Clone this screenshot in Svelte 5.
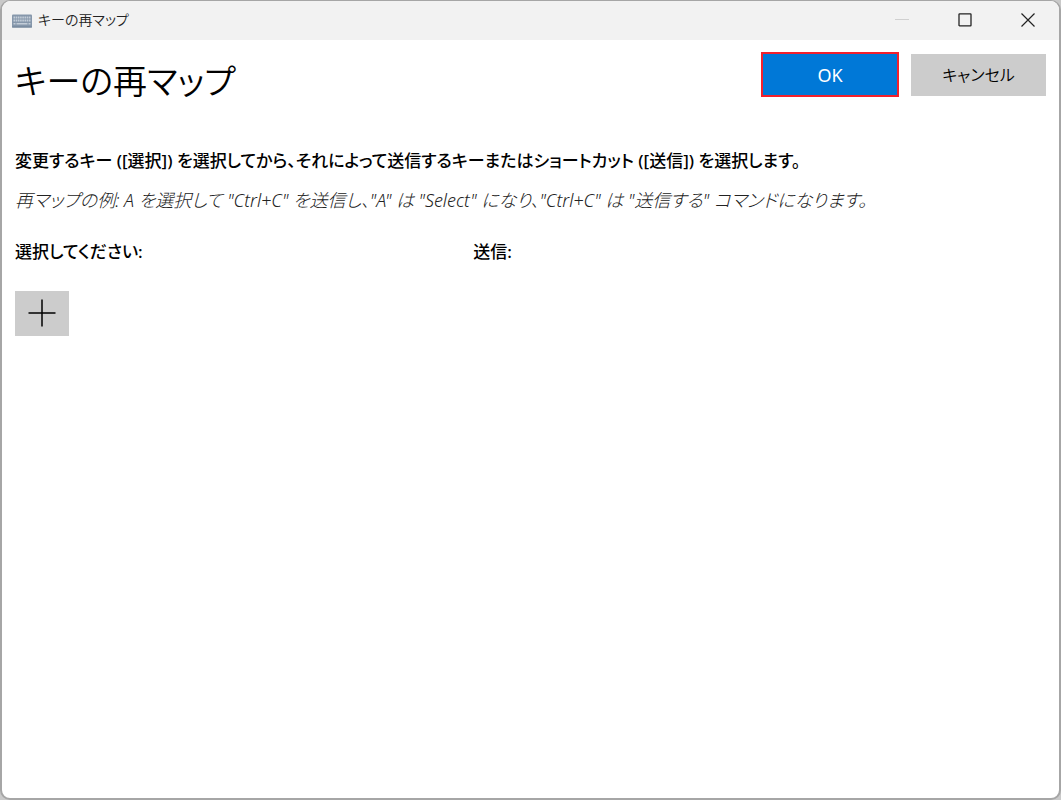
<script lang="ts">
  const title = 'キーの再マップ';
</script>

<main class="window">
  <header class="titlebar">
    <svg class="app-icon" viewBox="0 0 20 14" aria-hidden="true">
      <rect width="20" height="13" y="0.5" rx="1" fill="#8697ab" />
      <path d="M1.500 3.500h17M1.500 6.500h17" stroke="#c3cdd8" stroke-width="1.8" stroke-dasharray="1.6 0.6" />
      <path d="M1.500 9.800h2M4.500 9.800h11M16.500 9.800h2" stroke="#c3cdd8" stroke-width="1.6" />
      <path d="M0 13h20" stroke="#6f8196" />
    </svg>
    <span class="caption">{title}</span>
    <div class="controls">
      <button aria-label="最小化" disabled>
        <svg viewBox="0 0 14 14"><path d="M0 6.500h14" stroke="#d0d0d0" /></svg>
      </button>
      <button aria-label="最大化">
        <svg viewBox="0 0 14 14"><rect x="1" y="0.8" width="12" height="12" rx="0.6" fill="none" stroke="#222" stroke-width="1.3" /></svg>
      </button>
      <button aria-label="閉じる">
        <svg viewBox="0 0 14 14"><path d="M0.500 0.500l13 13M13.500 0.500l-13 13" stroke="#222" stroke-width="1.2" /></svg>
      </button>
    </div>
  </header>

  <div class="content">
    <div class="heading">
      <h1>{title}</h1>
      <div class="actions">
        <button class="ok">OK</button>
        <button class="cancel">キャンセル</button>
      </div>
    </div>

    <p class="lead">変更するキー ([選択]) を選択してから、それによって送信するキーまたはショートカット ([送信]) を選択します。</p>
    <p class="example">再マップの例: A を選択して "Ctrl+C" を送信し、"A" は "Select" になり、"Ctrl+C" は "送信する" コマンドになります。</p>

    <div class="columns">
      <h2>選択してください:</h2>
      <h2>送信:</h2>
    </div>

    <button class="add" aria-label="追加">
      <svg viewBox="0 0 28 28"><path d="M14 0.500v27M0.500 14h27" stroke="#000" stroke-width="1.500" /></svg>
    </button>
  </div>
</main>

<style>
  :global(body) {
    margin: 0;
    background: #c9c9c9;
  }
  .window {
    box-sizing: border-box;
    min-height: 100vh;
    display: flex;
    flex-direction: column;
    overflow: hidden;
    border: 2px solid #a6a6a6;
    border-top-width: 1px;
    border-radius: 10px;
    background: #fff;
    color: #000;
    font-family: "Noto Sans", "Noto Sans CJK JP", sans-serif;
    font-feature-settings: "palt";
    font-size: 18px;
    line-height: 24px;
  }
  button {
    font: inherit;
    font-feature-settings: inherit;
    color: inherit;
    border: 0;
    padding: 0;
  }
  svg {
    display: block;
  }
  .titlebar {
    display: flex;
    align-items: center;
    height: 39px;
    padding-left: 10px;
    background: #f2f2f2;
  }
  .app-icon {
    width: 20px;
    height: 14px;
  }
  .caption {
    margin-left: 6px;
    font-size: 14px;
    line-height: 20px;
    padding-bottom: 2px;
    font-weight: 350;
    color: #222;
  }
  .controls {
    display: flex;
    margin-left: auto;
    height: 38px;
    align-self: flex-start;
  }
  .controls button {
    display: grid;
    place-items: center;
    width: 63px;
    background: none;
  }
  .controls svg {
    width: 14px;
    height: 14px;
  }
  .content {
    padding: 12px 13px;
  }
  .heading {
    display: flex;
    justify-content: space-between;
    align-items: flex-start;
  }
  h1 {
    margin: 2px 0 0;
    font-size: 34px;
    line-height: 54px;
    font-weight: 350;
  }
  .actions {
    display: flex;
    align-items: center;
    gap: 12px;
  }
  .ok {
    box-sizing: border-box;
    width: 138px;
    height: 45px;
    border: 2px solid #f3202c;
    background: #0078d7;
    color: #fff;
  }
  .cancel {
    width: 135px;
    height: 42px;
    background: #ccc;
    font-size: 16px;
    font-weight: 350;
  }
  p,
  h2 {
    margin: 0;
  }
  .lead,
  h2 {
    font-size: 17px;
    font-weight: 500;
  }
  .lead {
    margin-top: 41px;
  }
  .example {
    margin-top: 15px;
    font-weight: 300;
    font-style: italic;
    color: #222;
  }
  .columns {
    display: grid;
    grid-template-columns: 4fr 5fr;
    margin-top: 28px;
  }
  .add {
    display: grid;
    place-items: center;
    width: 54px;
    height: 45px;
    margin-top: 27px;
    background: #ccc;
  }
  .add svg {
    width: 28px;
    height: 28px;
    margin-bottom: 2px;
  }
</style>
